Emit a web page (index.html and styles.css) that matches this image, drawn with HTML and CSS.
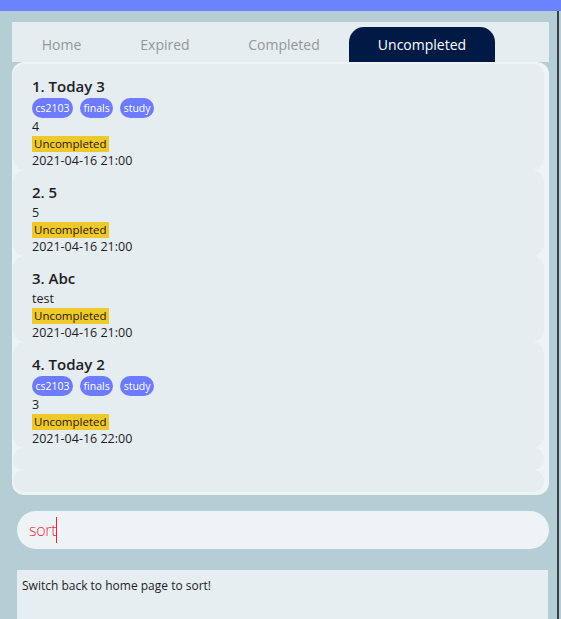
FILE: index.html
```html
<!DOCTYPE html>
<html>
<head>
<meta charset="utf-8">
<link rel="stylesheet" href="styles.css">
</head>
<body>
<div class="topbar"></div>
<div class="app">
  <nav class="tabs">
    <div class="tab tab-home">Home</div>
    <div class="tab tab-expired">Expired</div>
    <div class="tab tab-completed">Completed</div>
    <div class="tab tab-uncompleted active">Uncompleted</div>
  </nav>
  <div class="list">
    <div class="cell">
      <div class="title">1. Today 3</div>
      <div class="tags"><span class="tag">cs2103</span><span class="tag">finals</span><span class="tag">study</span></div>
      <div class="line">4</div>
      <div class="line"><span class="badge">Uncompleted</span></div>
      <div class="line">2021-04-16 21:00</div>
    </div>
    <div class="cell">
      <div class="title">2. 5</div>
      <div class="line">5</div>
      <div class="line"><span class="badge">Uncompleted</span></div>
      <div class="line">2021-04-16 21:00</div>
    </div>
    <div class="cell">
      <div class="title">3. Abc</div>
      <div class="line">test</div>
      <div class="line"><span class="badge">Uncompleted</span></div>
      <div class="line">2021-04-16 21:00</div>
    </div>
    <div class="cell">
      <div class="title">4. Today 2</div>
      <div class="tags"><span class="tag">cs2103</span><span class="tag">finals</span><span class="tag">study</span></div>
      <div class="line">3</div>
      <div class="line"><span class="badge">Uncompleted</span></div>
      <div class="line">2021-04-16 22:00</div>
    </div>
    <div class="cell empty"></div>
    <div class="cell empty"></div>
  </div>
  <div class="cmd"><span class="cmd-text">sort</span><span class="caret"></span></div>
  <div class="result">Switch back to home page to sort!</div>
</div>
</body>
</html>
```
FILE: styles.css
```css
html, body {
  margin: 0;
  padding: 0;
}
body {
  background: #b5cdd5;
  font-family: "Open Sans", "Noto Sans", sans-serif;
  overflow: hidden;
  width: 561px;
  height: 619px;
}
.topbar {
  height: 11px;
  background: #6c83ff;
}
.app {
  width: 559px;
  height: 608px;
  border-right: 2px solid #3a3f41;
  padding-top: 11px;
  box-sizing: border-box;
  display: flex;
  flex-direction: column;
}
.tabs {
  margin-left: 12px;
  width: 537px;
  height: 40px;
  background: #e5edf0;
  display: flex;
  align-items: flex-end;
  flex-shrink: 0;
}
.tab {
  height: 35px;
  line-height: 35px;
  text-align: center;
  font-size: 14px;
  color: #93979b;
}
.tab-home { width: 99px; }
.tab-expired { width: 108px; }
.tab-completed { width: 130px; }
.tab-uncompleted { width: 146px; }
.tab.active {
  background: #001a45;
  color: #ffffff;
  border-radius: 15px 15px 0 0;
}
.list {
  margin-left: 12px;
  width: 537px;
  height: 433px;
  background: #eef3f6;
  border-radius: 12px;
  padding: 2px 5px 0 1px;
  box-sizing: border-box;
  overflow: hidden;
  flex-shrink: 0;
}
.cell {
  background: #e5edf0;
  border-radius: 12px;
  padding: 12px 0 1px 19px;
  box-sizing: border-box;
  color: #1c1c26;
}
.cell.empty {
  height: 22px;
  padding: 0;
}
.title {
  font-size: 15px;
  font-weight: 600;
  line-height: 20px;
  height: 20px;
  margin-bottom: 2px;
}
.tags {
  display: flex;
  gap: 7px;
  margin-top: 1px;
  height: 20px;
}
.tag {
  background: #6c7bff;
  color: #ffffff;
  font-size: 10.5px;
  line-height: 20px;
  height: 20px;
  padding: 0 3.5px;
  border-radius: 10px;
}
.line {
  font-size: 12.5px;
  line-height: 17px;
  height: 17px;
}
.badge {
  display: inline-block;
  background: #eec92c;
  color: #2c1608;
  font-size: 11.5px;
  line-height: 16px;
  padding: 0 2px;
}
.cmd {
  margin: 16px 0 0 17px;
  width: 532px;
  height: 38px;
  border-radius: 19px;
  background: #eef3f6;
  display: flex;
  align-items: center;
  padding-left: 12px;
  box-sizing: border-box;
  flex-shrink: 0;
}
.cmd-text {
  display: inline-block;
  width: 27px;
  color: #e8323e;
  font-size: 16px;
  font-weight: 300;
  letter-spacing: -0.3px;
  white-space: nowrap;
}
.caret {
  display: inline-block;
  width: 1px;
  height: 26px;
  background: #ee2030;
}
.result {
  margin: 21px 0 0 17px;
  width: 531px;
  flex-grow: 1;
  background: #e6eef1;
  font-size: 12px;
  line-height: 16px;
  color: #1c1c2a;
  padding: 8px 5px;
  box-sizing: border-box;
}
```
